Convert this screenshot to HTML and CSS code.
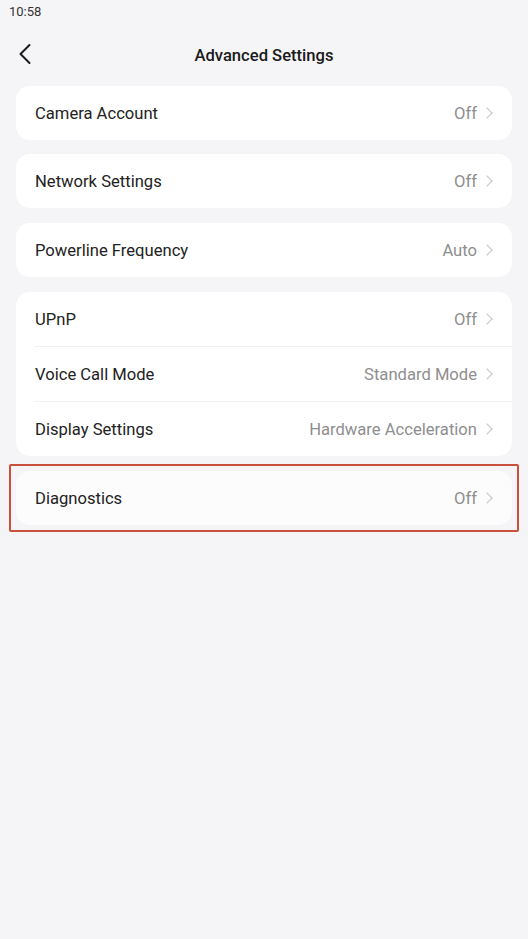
FILE: index.html
```html
<!DOCTYPE html>
<html lang="en">
<head>
    <meta charset="UTF-8">
    <meta name="viewport" content="width=device-width, initial-scale=1.0">
    <title>Advanced Settings</title>
    <link rel="stylesheet" href="styles.css">
</head>
<body>
    <div class="status-bar">10:58</div>

    <div class="nav-bar">
        <button class="back" type="button" aria-label="Back">
            <svg width="14" height="22" viewBox="0 0 14 22">
                <path d="M11.5 2 L2.5 11 L11.5 20" fill="none" stroke="#1a1a1a" stroke-width="2" stroke-linecap="round" stroke-linejoin="round"/>
            </svg>
        </button>
        <h1>Advanced Settings</h1>
    </div>

    <div class="list">
        <div class="card">
            <div class="row">
                <span class="label">Camera Account</span>
                <span class="value">Off</span>
                <span class="chevron"></span>
            </div>
        </div>

        <div class="card">
            <div class="row">
                <span class="label">Network Settings</span>
                <span class="value">Off</span>
                <span class="chevron"></span>
            </div>
        </div>

        <div class="card">
            <div class="row">
                <span class="label">Powerline Frequency</span>
                <span class="value">Auto</span>
                <span class="chevron"></span>
            </div>
        </div>

        <div class="card">
            <div class="row">
                <span class="label">UPnP</span>
                <span class="value">Off</span>
                <span class="chevron"></span>
            </div>
            <div class="row">
                <span class="label">Voice Call Mode</span>
                <span class="value">Standard Mode</span>
                <span class="chevron"></span>
            </div>
            <div class="row">
                <span class="label">Display Settings</span>
                <span class="value">Hardware Acceleration</span>
                <span class="chevron"></span>
            </div>
        </div>

        <!-- highlighted item -->
        <div class="card highlight">
            <div class="row">
                <span class="label">Diagnostics</span>
                <span class="value">Off</span>
                <span class="chevron"></span>
            </div>
            <span class="highlight-box"></span>
        </div>
    </div>
</body>
</html>
```

FILE: styles.css
```css
body {
    margin: 0;
    background-color: #f5f5f8;
    font-family: Roboto, "Noto Sans", Arial, sans-serif;
    color: #1f1f1f;
    min-height: 939px;
}

.status-bar {
    height: 24px;
    padding-left: 9px;
    font-size: 13px;
    line-height: 24px;
    color: #333;
}

.nav-bar {
    position: relative;
    height: 62px;
    display: flex;
    align-items: center;
    justify-content: center;
}

.nav-bar h1 {
    margin: 0;
    font-size: 16.6px;
    font-weight: 500;
    color: #1a1a1a;
}

.back {
    position: absolute;
    left: 18px;
    top: 19px;
    padding: 0;
    border: none;
    background: none;
    display: flex;
}

.list {
    display: flex;
    flex-direction: column;
    gap: 14px;
    padding: 0 16px;
}

.card {
    background-color: #fff;
    border-radius: 14px;
}

.card:nth-child(n+3) {
    margin-top: 1px;
}

.row {
    height: 54px;
    display: flex;
    align-items: center;
    padding: 0 18px 0 19px;
}

.row + .row {
    border-top: 1px solid #f1f1f3;
    margin-left: 18px;
    padding-left: 1px;
}

.label {
    flex: 1;
    font-size: 16.6px;
    color: #222;
}

.value {
    font-size: 16.6px;
    color: #8e8e8e;
}

.chevron {
    width: 7px;
    height: 7px;
    border-top: 1.5px solid #c4c4c4;
    border-right: 1.5px solid #c4c4c4;
    transform: rotate(45deg);
    margin-left: 6px;
    margin-right: 3px;
}

.highlight {
    position: relative;
    background-color: #fcfcfd;
}

.highlight-box {
    position: absolute;
    left: -7px;
    right: -7px;
    top: -7px;
    bottom: -7px;
    border: 2px solid #c8503c;
    border-radius: 2px;
}
```
